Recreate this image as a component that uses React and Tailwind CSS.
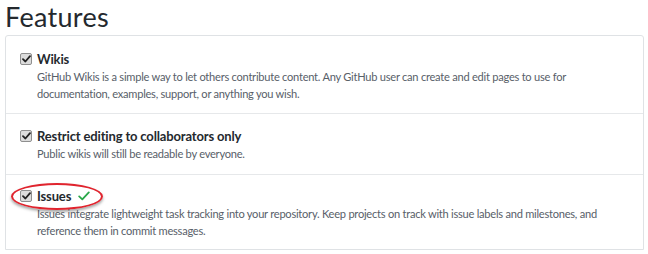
import React from "react";

function Box() {
  return (
    <span className="relative inline-flex h-[12px] w-[12px] shrink-0 items-center justify-center rounded-[2px] border border-[#8f8f8f] bg-[#dcdcdc]">
      <svg width="9" height="8" viewBox="0 0 9 8" fill="none">
        <path d="M1 4.2 L3.4 6.5 L8 1.2" stroke="#222" strokeWidth="1.8" strokeLinecap="round" strokeLinejoin="round" />
      </svg>
    </span>
  );
}

function Row({ title, lines, extra, last, pt, pb }) {
  return (
    <div className={`flex flex-col pl-[14px] pr-3 ${pt} ${pb} ${last ? "" : "border-b border-[#e6e8ea]"}`}>
      <div className="flex h-[18px] items-center">
        <Box />
        <span className="ml-[5px] text-[13px] font-bold leading-[18px] tracking-[-0.15px] text-[#24292e]">{title}</span>
        {extra}
      </div>
      <p className="ml-[17px] whitespace-nowrap text-[11.1px] leading-[17px] tracking-[-0.25px] text-[#586069]">
        {lines.map((l, i) => (
          <React.Fragment key={i}>
            {i > 0 && <br />}
            {l}
          </React.Fragment>
        ))}
      </p>
    </div>
  );
}

export default function App() {
  return (
    <div className="h-[254px] w-[648px] overflow-hidden bg-white" style={{ fontFamily: 'Lato, "Noto Sans", sans-serif' }}>
      <h2 className="pl-[5px] pt-[1px] text-[27px] font-normal leading-[31px] tracking-[0.3px] text-[#24292e]">Features</h2>
      <div className="relative ml-[5px] mt-[3px] w-[639px] rounded-t-[3px] border border-[#dfe2e5]">
        <Row
          pt="pt-[14px]"
          pb="pb-[11px]"
          title="Wikis"
          lines={[
            "GitHub Wikis is a simple way to let others contribute content. Any GitHub user can create and edit pages to use for",
            "documentation, examples, support, or anything you wish.",
          ]}
        />
        <Row
          pt="pt-[13px]"
          pb="pb-[12px]"
          title="Restrict editing to collaborators only"
          lines={["Public wikis will still be readable by everyone."]}
        />
        <Row
          pt="pt-[12px]"
          pb="pb-[10px]"
          last
          title="Issues"
          extra={
            <svg className="ml-[7px]" width="12" height="10" viewBox="0 0 12 10" fill="none">
              <path d="M1.2 5.4 L4.3 8.3 L10.8 1.4" stroke="#2aa84a" strokeWidth="1.8" strokeLinecap="round" strokeLinejoin="round" />
            </svg>
          }
          lines={[
            "Issues integrate lightweight task tracking into your repository. Keep projects on track with issue labels and milestones, and",
            "reference them in commit messages.",
          ]}
        />
        <div className="absolute left-[5px] top-[147px] h-[27px] w-[92px] rounded-[50%] border-2 border-[#e0242e] shadow-[0_2px_3px_rgba(0,0,0,0.35)]" />
      </div>
    </div>
  );
}
